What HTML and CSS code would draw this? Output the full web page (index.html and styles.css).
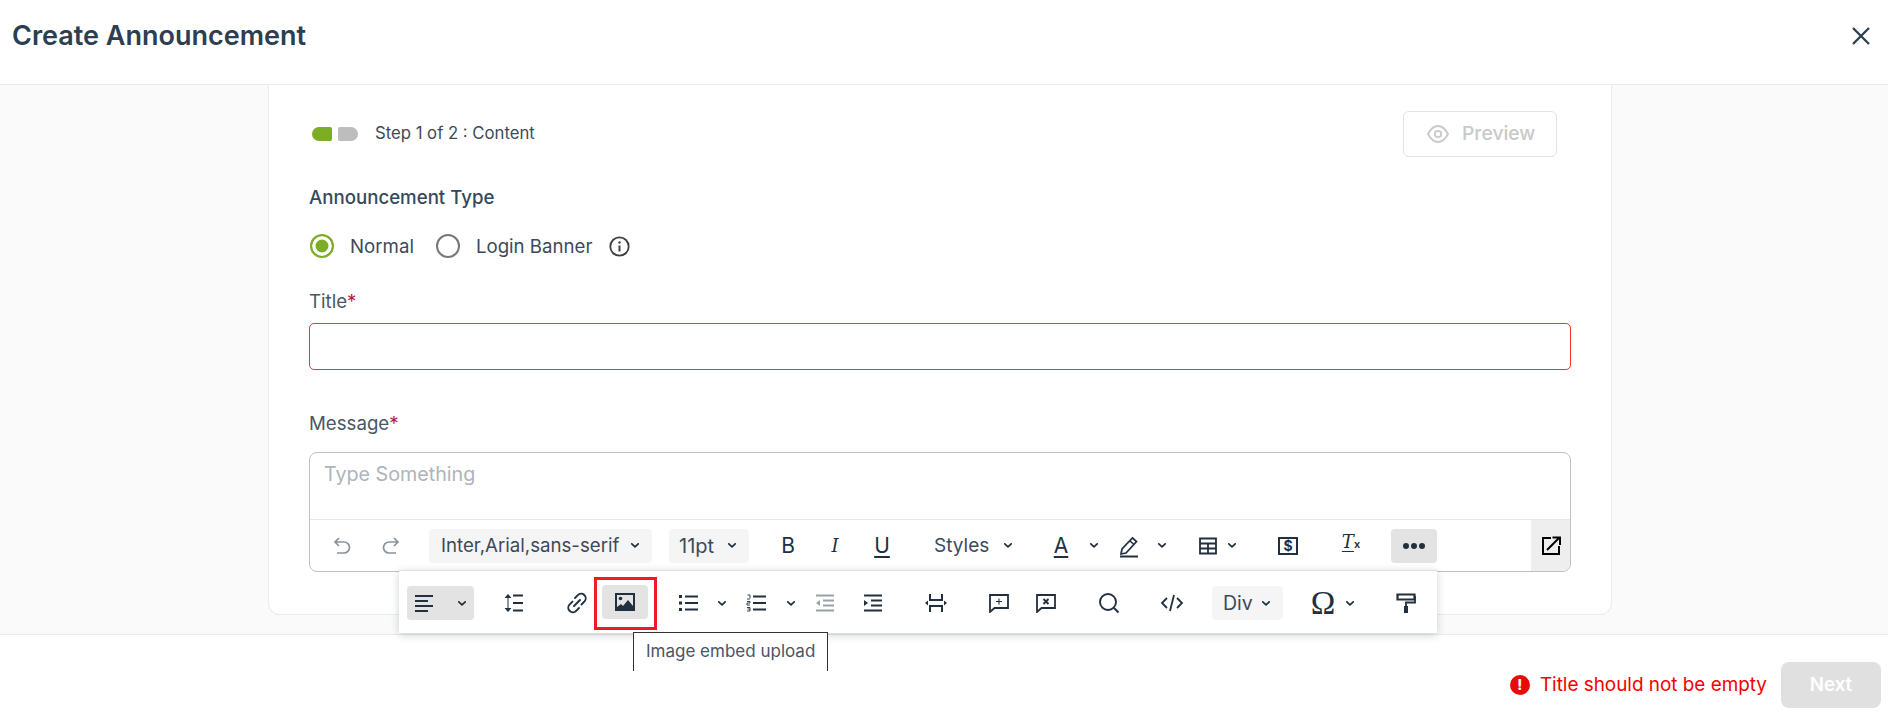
FILE: index.html
```html
<!DOCTYPE html>
<html lang="en">
<head>
<meta charset="utf-8">
<title>Create Announcement</title>
<link rel="stylesheet" href="styles.css">
</head>
<body>
<svg class="defs" width="0" height="0" aria-hidden="true">
  <symbol id="chev" viewBox="0 0 10 6"><path d="M1 1l4 3.600L9 1" fill="none" stroke="currentColor" stroke-width="2.200" stroke-linecap="round" stroke-linejoin="round"/></symbol>
</svg>
<header class="top">
  <h1 class="top-title">Create Announcement</h1>
  <button class="close" aria-label="Close">
    <svg width="18" height="18" viewBox="0 0 18 18"><path d="M1 1l16 16M17 1L1 17" fill="none" stroke="currentColor" stroke-width="2.300"/></svg>
  </button>
</header>
<main class="main">
  <section class="card">
    <div class="step-row">
      <div class="step">
        <span class="pill pill-on"></span><span class="pill pill-off"></span>
        <span class="step-text">Step 1 of 2 : Content</span>
      </div>
      <button class="preview">
        <svg width="22" height="20" viewBox="0 0 22 20"><path d="M1 10c2.600-5 6-8 10-8s7.400 3 10 8c-2.600 5-6 8-10 8s-7.400-3-10-8z" fill="none" stroke="currentColor" stroke-width="1.800"/><circle cx="11" cy="10" r="3.200" fill="none" stroke="currentColor" stroke-width="1.800"/></svg>
        <span class="preview-text">Preview</span>
      </button>
    </div>
    <div class="label label-type">Announcement Type</div>
    <div class="radios">
      <span class="radio radio-on"></span><span class="radio-text">Normal</span>
      <span class="radio radio-off"></span><span class="radio-text">Login Banner</span>
      <span class="info">
        <svg width="21" height="21" viewBox="0 0 21 21"><circle cx="10.500" cy="10.500" r="9.200" fill="none" stroke="currentColor" stroke-width="1.800"/><circle cx="10.500" cy="6.500" r="1.200" fill="currentColor"/><path d="M10.500 9.500v6" stroke="currentColor" stroke-width="2"/></svg>
      </span>
    </div>
    <label class="label label-title">Title<span class="req">*</span></label>
    <input class="title-input" type="text" aria-label="Title">
    <label class="label label-msg">Message<span class="req">*</span></label>
    <div class="editor">
      <div class="editor-body">Type Something</div>
      <div class="tbar">
        <div class="grp grp-hist">
          <span class="tb dim"><svg width="24" height="24" viewBox="0 0 24 24"><path d="M8 4L4 8l4 4M4 8h9a5.500 5.500 0 0 1 0 11H6" fill="none" stroke="currentColor" stroke-width="1.700"/></svg></span>
          <span class="tb dim"><svg width="24" height="24" viewBox="0 0 24 24"><path d="M16 4l4 4-4 4M20 8h-9a5.500 5.500 0 0 0 0 11h7" fill="none" stroke="currentColor" stroke-width="1.700"/></svg></span>
        </div>
        <div class="grp grp-sel">
          <span class="sel sel-font">Inter,Arial,sans-serif<svg class="chev"><use href="#chev"/></svg></span>
          <span class="sel sel-size">11pt<svg class="chev"><use href="#chev"/></svg></span>
        </div>
        <div class="grp">
          <span class="tb ch ch-b">B</span>
          <span class="tb ch ch-i">I</span>
          <span class="tb ch ch-u">U</span>
        </div>
        <span class="sel sel-plain sel-styles">Styles<svg class="chev"><use href="#chev"/></svg></span>
        <div class="grp grp-split">
          <span class="tb ch ch-a">A</span>
          <span class="cv"><svg><use href="#chev"/></svg></span>
          <span class="tb"><svg width="24" height="24" viewBox="0 0 24 24"><path d="M15.500 4l4 3.500L9 19l-5 1 1-5z" fill="none" stroke="currentColor" stroke-width="1.700"/><path d="M13 7l4 3.500" stroke="currentColor" stroke-width="1.500"/><path d="M3 22.500h18" stroke="currentColor" stroke-width="2"/></svg></span>
          <span class="cv"><svg><use href="#chev"/></svg></span>
        </div>
        <div class="grp grp-table">
          <span class="tb tb-narrow"><svg width="20" height="20" viewBox="0 0 20 20"><path d="M2 2.500h16v15H2zM2 7.500h16M2 12.500h16M10 7.500v10" fill="none" stroke="currentColor" stroke-width="1.800"/></svg></span>
          <span class="cv cv-narrow"><svg><use href="#chev"/></svg></span>
        </div>
        <span class="tb tb-money"><span class="money">$</span></span>
        <span class="tb tb-clear"><span class="clear-t">T</span><span class="clear-x">x</span></span>
        <span class="tb tb-more">
          <svg width="24" height="8" viewBox="0 0 24 8"><circle cx="4" cy="4" r="3" fill="currentColor"/><circle cx="12" cy="4" r="3" fill="currentColor"/><circle cx="20" cy="4" r="3" fill="currentColor"/></svg>
        </span>
        <span class="popout">
          <svg width="20" height="20" viewBox="0 0 20 20"><path d="M10 2H2v16h16v-8" fill="none" stroke="#000" stroke-width="2"/><path d="M6 14L18 2M11.500 1.500h7.500V9" fill="none" stroke="#000" stroke-width="2"/></svg>
        </span>
      </div>
      <div class="more">
        <span class="active-split">
          <span class="split-icon"><svg width="20" height="18" viewBox="0 0 20 18"><path d="M1 2h18M1 7h13M1 12h18M1 17h13" fill="none" stroke="currentColor" stroke-width="2"/></svg></span>
          <span class="cv"><svg><use href="#chev"/></svg></span>
        </span>
        <span class="tb"><svg width="22" height="20" viewBox="0 0 22 20"><path d="M2 5l3-3.500L8 5M2 15l3 3.500L8 15M5 2v16" fill="currentColor" stroke="currentColor" stroke-width="1"/><path d="M10 2.500h10M10 10h10M10 17.500h10" stroke="currentColor" stroke-width="2.200"/></svg></span>
        <div class="grp grp-link">
          <span class="tb"><svg width="22" height="22" viewBox="0 0 22 22"><path d="M9 6l2.800-2.800a4.400 4.400 0 0 1 6.700 6.200L15.500 12.500M13 16l-2.800 2.800a4.400 4.400 0 0 1-6.700-6.200l3-3M8 14l6-6" fill="none" stroke="currentColor" stroke-width="1.900" stroke-linecap="round"/></svg></span>
          <span class="tb tb-image">
            <svg width="20" height="18" viewBox="0 0 20 18"><path d="M0 0h20v18H0z" fill="currentColor"/><path d="M2 2h16v11l-5-6-5 6-2-2-4 3z" fill="#e3e3e3"/><circle cx="5.500" cy="5.500" r="1.800" fill="currentColor"/></svg>
            <span class="mark"></span>
            <span class="tip">Image embed upload</span>
          </span>
        </div>
        <div class="grp">
          <span class="tb"><svg width="20" height="18" viewBox="0 0 20 18"><path d="M1 1h3v3H1zM1 7.500h3v3H1zM1 14h3v3H1z" fill="currentColor"/><path d="M7 2.500h13M7 9h13M7 15.500h13" stroke="currentColor" stroke-width="2.200"/></svg></span>
          <span class="cv"><svg><use href="#chev"/></svg></span>
          <span class="tb"><svg width="20" height="18" viewBox="0 0 20 18"><path d="M1.500 1H4v3.200M1 5h3M1 7.500h3v1.500H1v2h3M1 13.500h3v1.500H1.500M4 15v2H1" fill="none" stroke="currentColor" stroke-width=".9"/><path d="M7 2.500h13M7 9h13M7 15.500h13" stroke="currentColor" stroke-width="2.200"/></svg></span>
          <span class="cv cv-wide"><svg><use href="#chev"/></svg></span>
          <span class="tb dim2"><svg width="20" height="18" viewBox="0 0 20 18"><path d="M1 1.500h18M8 6.500h11M8 11.500h11M1 16.500h18" stroke="currentColor" stroke-width="2"/><path d="M1 9l4-3v6z" fill="currentColor"/></svg></span>
          <span class="tb tb-indent"><svg width="20" height="18" viewBox="0 0 20 18"><path d="M1 1.500h18M8 6.500h11M8 11.500h11M1 16.500h18" stroke="currentColor" stroke-width="2.200"/><path d="M5 9L1 6v6z" fill="currentColor"/></svg></span>
        </div>
        <span class="tb"><svg width="22" height="20" viewBox="0 0 22 20"><path d="M5 1v6h12V1M5 19v-6h12v6" fill="none" stroke="currentColor" stroke-width="2"/><path d="M0 10l3-2.500v5zM22 10l-3-2.500v5z" fill="currentColor"/></svg></span>
        <div class="grp">
          <span class="tb"><svg width="22" height="20" viewBox="0 0 22 20"><path d="M2 2h18v13H6.500L2 19z" fill="none" stroke="currentColor" stroke-width="1.800"/><path d="M11 5.500v6M8 8.500h6" stroke="currentColor" stroke-width="1.100"/></svg></span>
          <span class="tb"><svg width="22" height="20" viewBox="0 0 22 20"><path d="M2 2h18v13H6.500L2 19z" fill="none" stroke="currentColor" stroke-width="1.800"/><path d="M8.500 6l5 5M13.500 6l-5 5" stroke="currentColor" stroke-width="1.900"/></svg></span>
        </div>
        <span class="tb"><svg width="22" height="22" viewBox="0 0 22 22"><circle cx="10" cy="10" r="8" fill="none" stroke="currentColor" stroke-width="1.900"/><path d="M16 16l4.500 4.500" stroke="currentColor" stroke-width="1.900"/></svg></span>
        <span class="tb"><svg width="24" height="20" viewBox="0 0 24 20"><path d="M7 5l-5 5 5 5M17 5l5 5-5 5M14 2l-4 16" fill="none" stroke="currentColor" stroke-width="1.800"/></svg></span>
        <span class="sel sel-div">Div<svg class="chev"><use href="#chev"/></svg></span>
        <div class="grp grp-omega">
          <span class="tb ch ch-omega">Ω</span>
          <span class="cv"><svg><use href="#chev"/></svg></span>
        </div>
        <span class="tb tb-paint"><svg width="20" height="20" viewBox="0 0 20 20"><path d="M1.500 1.500h17v5h-17z" fill="none" stroke="currentColor" stroke-width="2.200"/><path d="M18 4h1v5.500H10V13" fill="none" stroke="currentColor" stroke-width="1.800"/><path d="M8 13h4v7H8z" fill="currentColor"/></svg></span>
      </div>
    </div>
  </section>
</main>
<footer class="foot">
  <span class="err-ico">!</span>
  <span class="err-text">Title should not be empty</span>
  <button class="next">Next</button>
</footer>
</body>
</html>
```

FILE: styles.css
```css
* { box-sizing: border-box; }
html, body { height: 100%; }
body {
  margin: 0;
  display: flex;
  flex-direction: column;
  height: 721px;
  overflow: hidden;
  background: #fff;
  color: #222f3e;
  font-family: Inter, "Liberation Sans", sans-serif;
}
button { font-family: inherit; }
.defs { position: absolute; }

.top {
  height: 85px;
  flex: none;
  display: flex;
  align-items: center;
  justify-content: space-between;
  padding: 0 18px 12px 12px;
  border-bottom: 1px solid #ebebeb;
}
.top-title { margin: 0; font-size: 27px; font-weight: 600; line-height: 30px; color: #2c3e50; }
.close { border: 0; padding: 0; background: none; color: #2c3e50; width: 18px; height: 18px; }

.main {
  flex: none;
  height: 549px;
  background: #fafafa;
  padding-left: 268px;
}
.card {
  width: 1344px;
  height: 530px;
  background: #fff;
  border: 1px solid #ebebeb;
  border-top: 0;
  border-radius: 0 0 12px 12px;
  padding: 26px 40px 0;
}
.step-row { display: flex; justify-content: space-between; align-items: center; padding: 0 14px 0 3px; }
.step { display: flex; align-items: center; }
.pill { width: 20px; height: 14px; }
.pill-on { background: #7bae25; border-radius: 7px 2px 2px 7px; margin-right: 6px; }
.pill-off { background: #bdbdbd; border-radius: 2px 7px 7px 2px; }
.step-text { margin: 0 0 2px 17px; font-size: 16.700px; color: #3b4a5a; line-height: 20px; }
.preview {
  width: 154px;
  height: 46px;
  display: flex;
  align-items: center;
  gap: 13px;
  padding: 0 0 0 23px;
  background: #fff;
  border: 1px solid #e3e3e3;
  border-radius: 6px;
  color: #c9c9c9;
  font-size: 19.300px;
  font-weight: 500;
}
.preview-text { margin-bottom: 2px; }
.label { display: block; line-height: 24px; font-size: 18.670px; color: #4a5666; }
.label-type { margin-top: 29px; font-weight: 500; color: #34495e; }
.label-title { margin-top: 32px; }
.label-msg { margin-top: 42px; }
.req { color: #c0143c; font-weight: 400; }
.radios { display: flex; align-items: center; margin-top: 24px; height: 24px; font-size: 18.670px; color: #3b4a5a; }
.radio { width: 24px; height: 24px; border-radius: 50%; flex: none; margin-left: 1px; }
.radio-on { border: 2px solid #7bae25; background: #7bae25; box-shadow: inset 0 0 0 3.500px #fff; }
.radio-off { border: 2px solid #777; margin-left: 22px; }
.radio-text { margin-left: 16px; }
.info { display: flex; margin-left: 16px; color: #3f3f3f; }
.title-input {
  display: block;
  width: 100%;
  height: 47px;
  margin-top: 9px;
  border: 1px solid #f5352a;
  border-radius: 5px;
  outline: 0;
}

.editor {
  position: relative;
  height: 120px;
  margin-top: 16px;
  border: 1px solid #bfbfbf;
  border-radius: 8px;
  background: #fff;
}
.editor-body { height: 66px; padding: 8px 14px 0; font-size: 19.700px; line-height: 26px; color: #aeb4bb; }
.tbar {
  display: flex;
  align-items: center;
  gap: 16px;
  height: 52px;
  padding-left: 10px;
  border-top: 1px solid #e8e8e8;
  position: relative;
}
.grp { display: flex; align-items: center; gap: 1px; }
.grp-sel { gap: 17px; }
.grp-split { gap: 0; }
.grp-split .cv + .tb { margin-left: 2px; }
.grp-table { gap: 0; margin-left: 3px; }
.tb {
  width: 46px;
  height: 34px;
  flex: none;
  display: flex;
  align-items: center;
  justify-content: center;
  border-radius: 4px;
  color: #222f3e;
}
.tb-narrow { width: 34px; }
.dim { color: #8a929b; }
.dim2 { color: #9aa0a7; }
.cv { width: 20px; height: 34px; flex: none; display: flex; align-items: center; justify-content: center; color: #222f3e; }
.cv svg, .chev { width: 8px; height: 5px; flex: none; color: #222f3e; }
.cv-narrow { width: 14px; }
.cv-wide { width: 21px; }
.tb-indent { margin-left: 1px; }
.sel {
  height: 34px;
  flex: none;
  display: flex;
  align-items: center;
  justify-content: space-between;
  padding: 0 13px 0 12px;
  border-radius: 4px;
  background: #f5f5f5;
  font-size: 18.670px;
  color: #3b4a5a;
}
.sel-font { width: 223px; }
.sel-size { width: 80px; padding-left: 10px; font-size: 20px; }
.sel-plain { background: none; }
.sel-styles { width: 101px; padding-right: 10px; padding-left: 13px; font-size: 19px; }
.sel-div { width: 71px; padding: 0 13px 0 11px; font-size: 19.500px; }
.ch { font-size: 21px; font-weight: 400; color: #222f3e; }
.ch-i { font-family: "DejaVu Serif", serif; font-style: italic; font-size: 18px; }
.ch-u { text-decoration: underline; text-underline-offset: 3px; text-decoration-thickness: 2px; }
.ch-a { text-decoration: underline; text-underline-offset: 3px; text-decoration-thickness: 2px; }
.tb-money { margin-left: 10px; }
.money {
  width: 20px;
  height: 18px;
  border: 2px solid #222f3e;
  font-size: 14px;
  font-weight: 700;
  line-height: 14px;
  text-align: center;
}
.tb-clear { margin-left: 1px; align-items: baseline; padding-top: 2px; }
.clear-t { font-family: "DejaVu Serif", serif; font-style: italic; font-size: 18px; text-decoration: underline; text-underline-offset: 3px; }
.clear-x { font-size: 11px; font-weight: 600; }
.tb-more { background: #e3e3e3; margin-left: 1px; }
.popout {
  position: absolute;
  right: 0;
  top: 0;
  bottom: 0;
  width: 39px;
  display: flex;
  align-items: center;
  justify-content: center;
  background: #eeeeee;
  border-radius: 0 0 7px 0;
}

.more {
  position: absolute;
  z-index: 5;
  left: 89px;
  top: 117px;
  width: 1038px;
  height: 63px;
  display: flex;
  align-items: center;
  gap: 17px;
  padding: 2px 0 0 8px;
  background: #fff;
  border-top: 1px solid #e0e0e0;
  box-shadow: 0 2px 8px rgba(34, 47, 62, .22);
}
.active-split {
  width: 67px;
  height: 34px;
  flex: none;
  display: flex;
  align-items: center;
  background: #e3e3e3;
  border-radius: 4px;
}
.split-icon { width: 34px; display: flex; justify-content: center; }
.split-icon + .cv { margin-left: 11px; }
.grp-link { gap: 2px; }
.tb-image { position: relative; background: #e3e3e3; top: -1px; }
.mark {
  position: absolute;
  left: -8px;
  top: -8px;
  width: 63px;
  height: 53px;
  border: 3px solid #ed1c24;
}
.tip {
  position: absolute;
  left: 31px;
  top: 47px;
  width: 195px;
  height: 39px;
  padding-left: 12px;
  background: #fff;
  border: 1px solid #333;
  border-bottom: 0;
  font-size: 17px;
  line-height: 37px;
  color: #4a5568;
  white-space: nowrap;
}
.grp-omega { gap: 0; }
.grp-omega .cv { margin-left: -6px; }
.ch-omega { font-family: "Liberation Serif", serif; font-size: 33px; font-weight: 400; }
.tb-paint { margin-left: 6px; }

.foot {
  flex: 1;
  display: flex;
  align-items: center;
  justify-content: flex-end;
  padding: 13px 7px 0 0;
  background: #fff;
  border-top: 1px solid #ebebeb;
}
.err-ico {
  width: 20px;
  height: 20px;
  border-radius: 50%;
  background: #e60a0a;
  color: #fff;
  font-size: 14px;
  font-weight: 800;
  line-height: 20px;
  text-align: center;
}
.err-text { margin-left: 10px; font-size: 18.900px; color: #f40000; }
.next {
  width: 100px;
  height: 46px;
  margin-left: 14px;
  border: 0;
  border-radius: 8px;
  background: #e0e0e0;
  color: #fff;
  font-size: 18.670px;
  font-weight: 600;
}
```
